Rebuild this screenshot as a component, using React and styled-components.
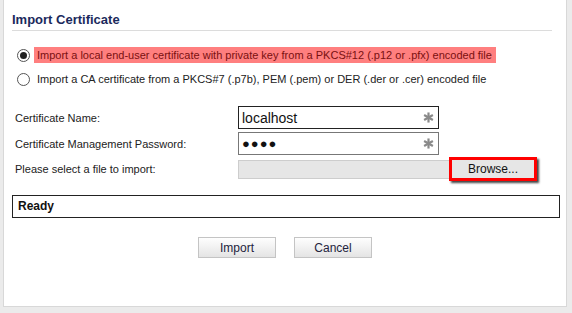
import React from "react";
import styled, { createGlobalStyle } from "styled-components";

const Global = createGlobalStyle`
  body {
    margin: 0;
    background: #ebebeb;
    font-family: "Liberation Sans", Arial, sans-serif;
  }
`;

const Panel = styled.section`
  box-sizing: border-box;
  width: 564px;
  height: 307px;
  margin-left: 3px;
  background: #fff;
  border: 1px solid #d8d8d8;
  border-top: none;
  padding: 0 8px;
`;

const Title = styled.h2`
  margin: 0;
  padding: 12px 0 3px 0;
  margin-right: 6px;
  font-size: 13px;
  font-weight: bold;
  color: #1b2a5c;
  border-bottom: 1px solid #dcdcdc;
`;

const Options = styled.div`
  display: flex;
  flex-direction: column;
  gap: 6px;
  padding: 15px 0 0 5px;
`;

const Option = styled.label`
  display: flex;
  align-items: center;
  gap: 7px;
  font-size: 11px;
  height: 18px;
  color: #222;
`;

const Radio = styled.span`
  box-sizing: border-box;
  width: 13px;
  height: 13px;
  border-radius: 50%;
  border: 1px solid #555;
  background: #fff;
  display: flex;
  align-items: center;
  justify-content: center;
  &::after {
    content: "";
    width: 7px;
    height: 7px;
    border-radius: 50%;
    background: ${(p) => (p.checked ? "#222" : "transparent")};
  }
`;

const OptionText = styled.span`
  padding: 2px 4px 2px 3px;
  margin-left: -3px;
  background: ${(p) => (p.highlight ? "#ff7f7f" : "transparent")};
  color: ${(p) => (p.highlight ? "#7a1010" : "#222")};
`;

const Form = styled.div`
  display: grid;
  grid-template-columns: 223px 1fr;
  row-gap: 3px;
  align-items: center;
  padding: 18px 0 0 3px;
`;

const Label = styled.span`
  font-size: 11px;
  color: #222;
`;

const Field = styled.div`
  box-sizing: border-box;
  width: 201px;
  height: 23px;
  border: 1px solid ${(p) => (p.focused ? "#222" : "#777")};
  display: flex;
  align-items: center;
  justify-content: space-between;
  padding: 0 4px 0 3px;
  font-size: 14px;
  color: #111;
`;

const Dots = styled.span`
  font-size: 13px;
  letter-spacing: 1px;
`;

const Star = styled.svg`
  width: 11px;
  height: 11px;
  flex: none;
`;

const Asterisk = () => (
  <Star viewBox="0 0 12 12">
    <g stroke="#8a8a8a" strokeWidth="2.4" strokeLinecap="butt">
      <line x1="6" y1="0.5" x2="6" y2="11.5" />
      <line x1="1.2" y1="3.2" x2="10.8" y2="8.8" />
      <line x1="1.2" y1="8.8" x2="10.8" y2="3.2" />
    </g>
  </Star>
);

const FileRow = styled.div`
  display: flex;
  align-items: center;
  height: 22px;
`;

const FileBox = styled.div`
  box-sizing: border-box;
  width: 215px;
  height: 19px;
  background: #e6e6e6;
  border: 1px solid #cdcdcd;
`;

const Browse = styled.button`
  box-sizing: border-box;
  margin-left: -4px;
  width: 88px;
  height: 24px;
  border: 3px solid #f00;
  background: #e6e6e6;
  box-shadow: 2px 2px 2px #444;
  font-family: "Liberation Sans", Arial, sans-serif;
  font-size: 12px;
  color: #111;
  padding: 0;
`;

const Status = styled.div`
  box-sizing: border-box;
  margin: 15px 0 0 0;
  width: 548px;
  height: 23px;
  border: 1px solid #222;
  padding: 3px 5px;
  font-size: 12px;
  font-weight: bold;
  color: #111;
`;

const Actions = styled.div`
  display: flex;
  justify-content: center;
  gap: 18px;
  padding-top: 19px;
`;

const Button = styled.button`
  box-sizing: border-box;
  width: 78px;
  height: 21px;
  border: 1px solid #c4c4c4;
  background: linear-gradient(#fefefe, #e4e4e4);
  font-family: "Liberation Sans", Arial, sans-serif;
  font-size: 12px;
  color: #23233d;
  padding: 0;
`;

export default function App() {
  return (
    <>
      <Global />
      <Panel>
        <Title>Import Certificate</Title>
        <Options>
          <Option>
            <Radio checked />
            <OptionText highlight>
              Import a local end-user certificate with private key from a PKCS#12 (.p12 or .pfx) encoded file
            </OptionText>
          </Option>
          <Option>
            <Radio />
            <OptionText>
              Import a CA certificate from a PKCS#7 (.p7b), PEM (.pem) or DER (.der or .cer) encoded file
            </OptionText>
          </Option>
        </Options>
        <Form>
          <Label>Certificate Name:</Label>
          <Field focused>
            <span>localhost</span>
            <Asterisk />
          </Field>
          <Label>Certificate Management Password:</Label>
          <Field>
            <Dots>●●●●</Dots>
            <Asterisk />
          </Field>
          <Label>Please select a file to import:</Label>
          <FileRow>
            <FileBox />
            <Browse>Browse...</Browse>
          </FileRow>
        </Form>
        <Status>Ready</Status>
        <Actions>
          <Button>Import</Button>
          <Button>Cancel</Button>
        </Actions>
      </Panel>
    </>
  );
}
